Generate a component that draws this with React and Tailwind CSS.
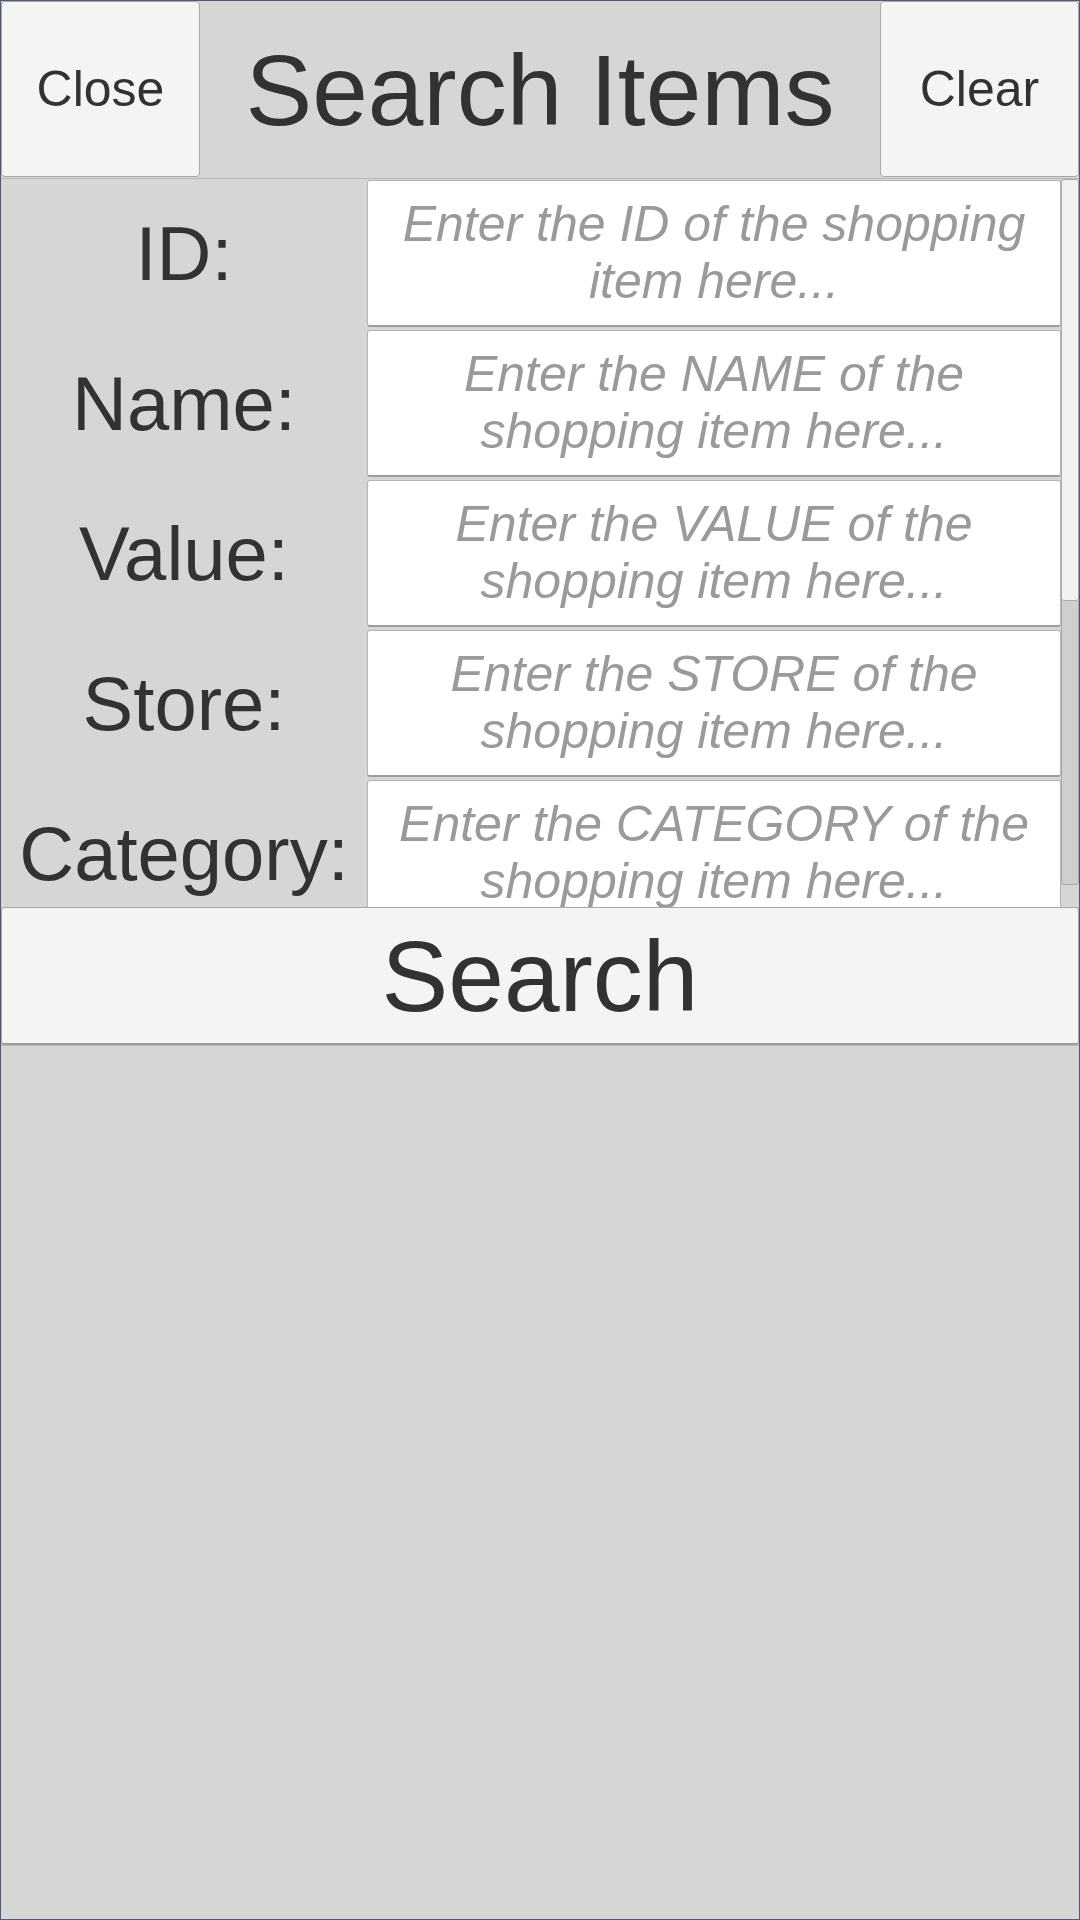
import React from 'react';

const fields = [
  { label: 'ID:', hint: 'Enter the ID of the shopping item here...' },
  { label: 'Name:', hint: 'Enter the NAME of the shopping item here...' },
  { label: 'Value:', hint: 'Enter the VALUE of the shopping item here...' },
  { label: 'Store:', hint: 'Enter the STORE of the shopping item here...' },
  { label: 'Category:', hint: 'Enter the CATEGORY of the shopping item here...' },
];

const FieldRow = ({ label, hint }) => (
  <div className="flex h-[150px] shrink-0 pb-[3px]">
    <div className="w-[366px] shrink-0 flex items-center justify-center text-[76px] text-[#323232] leading-none">
      {label}
    </div>
    <div className="flex-1 bg-white border border-[#b4b4b4] border-b-2 border-b-[#9c9c9c] rounded-[3px] flex items-center justify-center px-5 text-center italic text-[50px] leading-[57px] text-[#9a9a9a]">
      {hint}
    </div>
  </div>
);

const App = () => {
  return (
    <div className="w-[1080px] h-[1920px] bg-[#d6d6d6] border border-[#4a5b7a] flex flex-col overflow-hidden font-['Liberation_Sans',Arial,sans-serif]">
      <div className="flex h-[178px] shrink-0 border-b border-[#b8b8b8]">
        <button className="w-[199px] h-[176px] bg-[#f4f4f4] border border-[#a8a8a8] rounded-[4px] text-[50px] text-[#323232]">
          Close
        </button>
        <div className="flex-1 flex items-center justify-center text-[100px] text-[#323232] leading-none">
          Search Items
        </div>
        <button className="w-[199px] h-[176px] bg-[#f4f4f4] border border-[#a8a8a8] rounded-[4px] text-[50px] text-[#323232]">
          Clear
        </button>
      </div>

      <div className="flex h-[728px] shrink-0">
        <div className="flex-1 flex flex-col overflow-hidden pt-[1px]">
          {fields.map(f => (
            <FieldRow key={f.label} label={f.label} hint={f.hint} />
          ))}
        </div>
        <div className="w-[18px] shrink-0 flex flex-col h-[706px] bg-[#cfcfcf] border border-[#a8a8a8] rounded-[3px]">
          <div className="h-[421px] bg-[#f2f2f2] border-b border-[#a8a8a8] rounded-[3px]" />
        </div>
      </div>

      <button className="h-[138px] shrink-0 bg-[#f4f4f4] border border-[#a8a8a8] border-b-2 border-b-[#9c9c9c] rounded-[3px] text-[100px] text-[#323232] leading-none">
        Search
      </button>

      <div className="flex-1 border-t border-[#b8b8b8]" />
    </div>
  );
};

export default App;
